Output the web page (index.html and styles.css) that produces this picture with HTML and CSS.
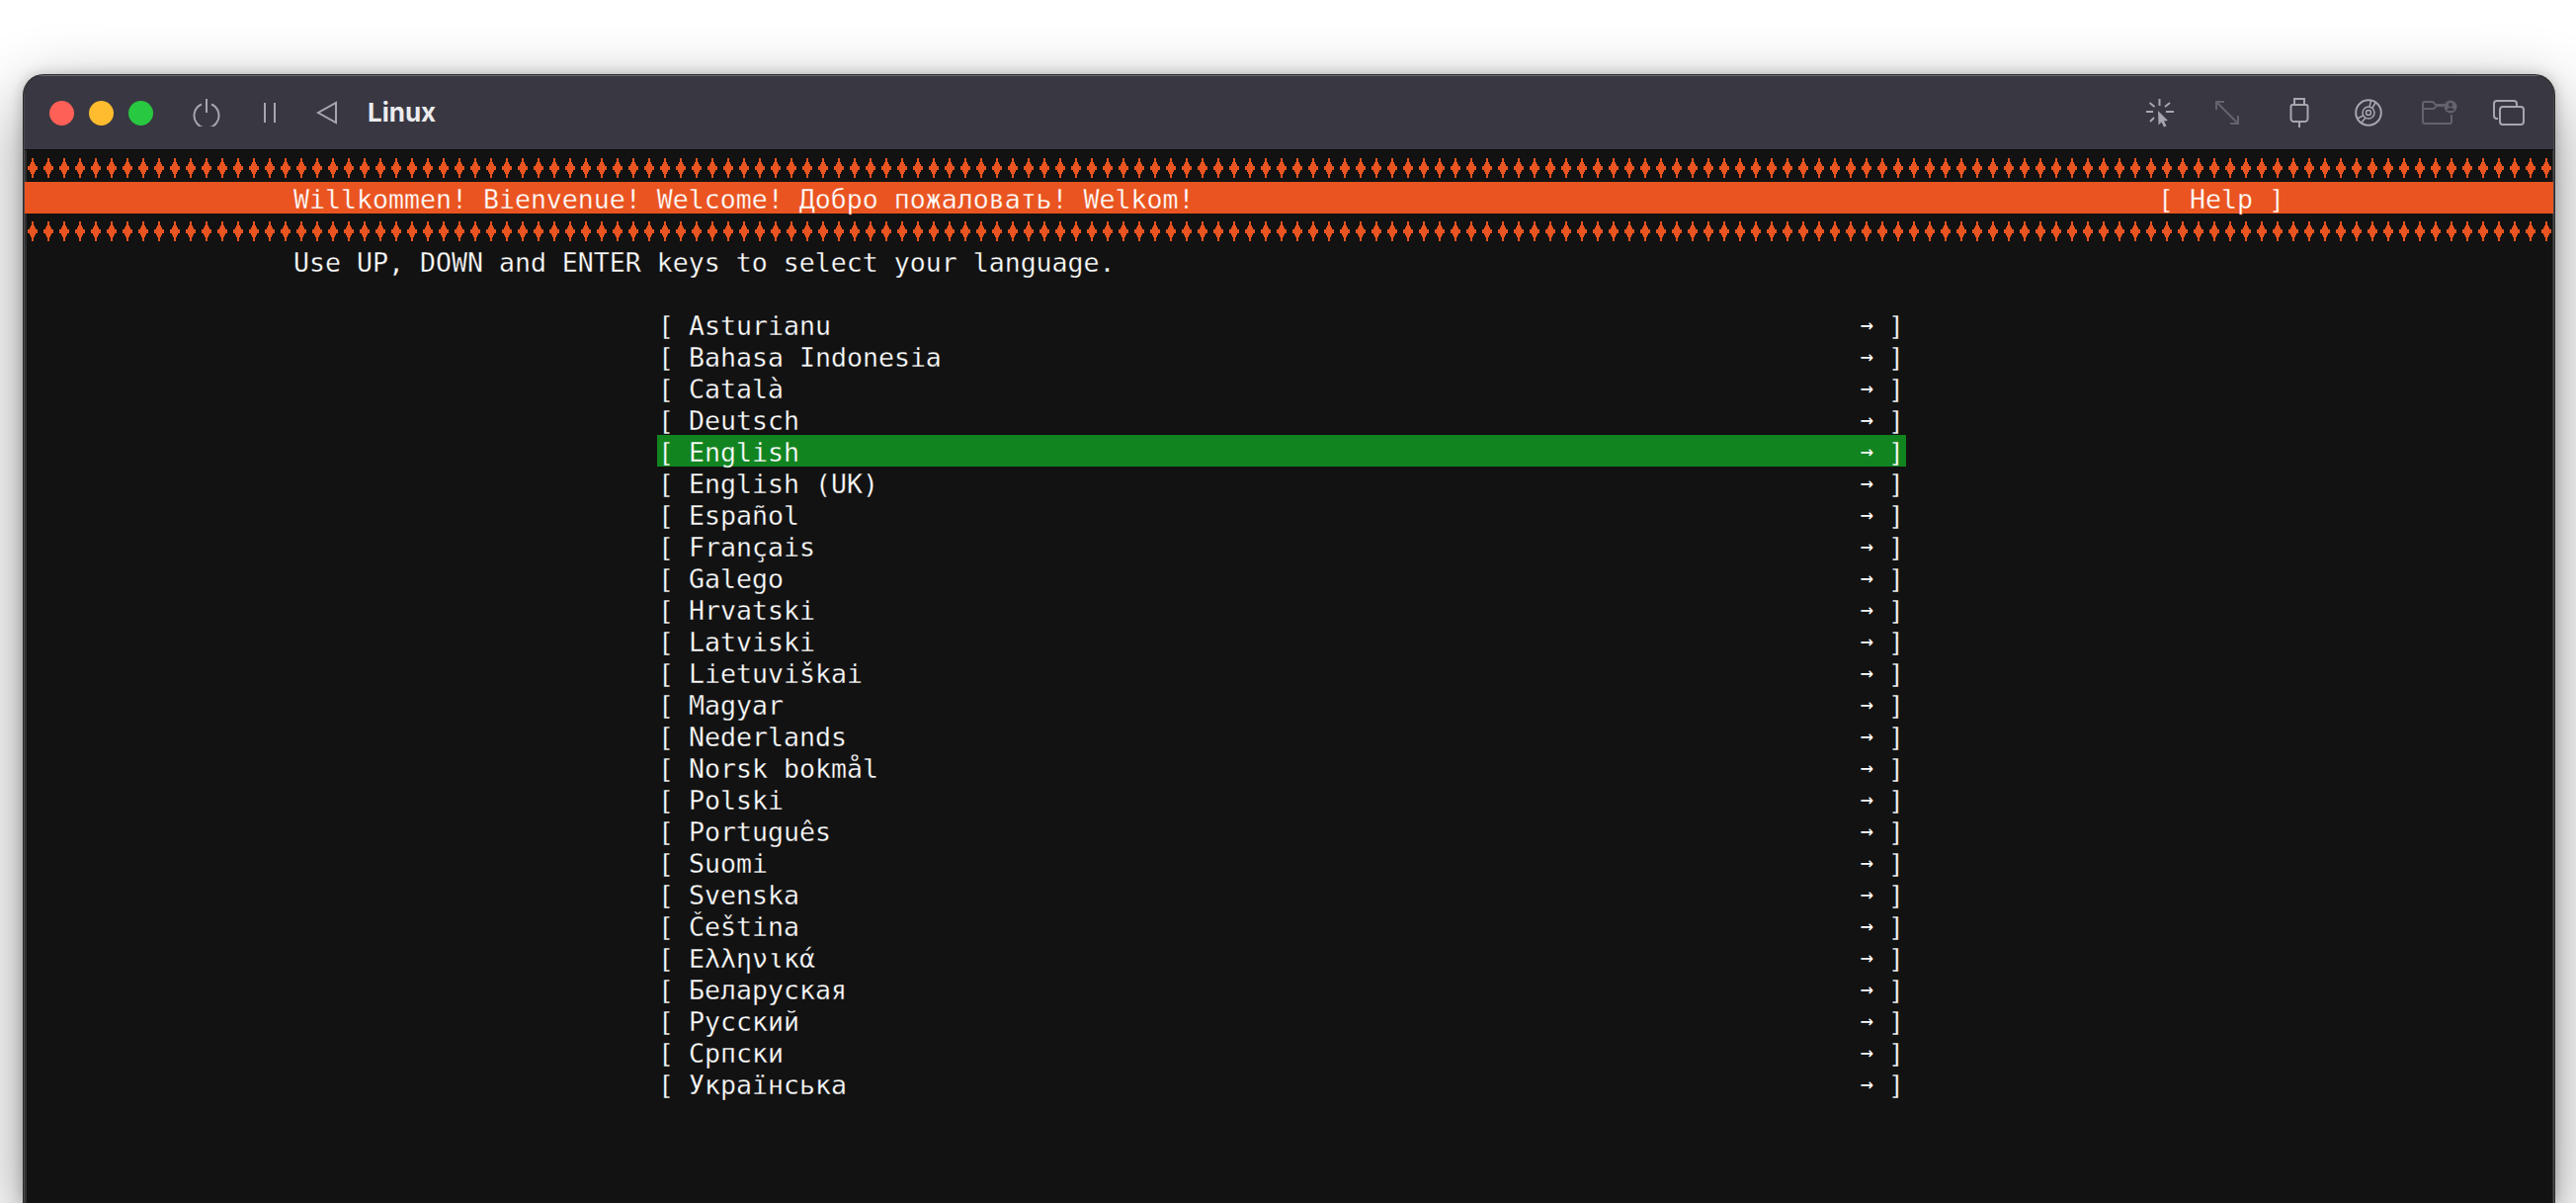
FILE: index.html
```html
<!DOCTYPE html>
<html lang="en">
<head>
<meta charset="utf-8">
<title>Linux</title>
<link rel="stylesheet" href="styles.css">
</head>
<body>
<svg class="defs" width="0" height="0" aria-hidden="true">
  <defs>
    <pattern id="dia" width="16" height="32" patternUnits="userSpaceOnUse">
      <path fill="#e95420" d="M7 8h2v4h1v2h1v2h2v4h-2v2h-1v2H9v4H7v-4H6v-2H5v-2H3v-4h2v-2h1v-2h1z"/>
    </pattern>
  </defs>
</svg>
<div class="window">
  <header class="titlebar">
    <div class="lights"><span class="light red"></span><span class="light yellow"></span><span class="light green"></span></div>
    <div class="tools-left">
      <svg class="ic ic-power" viewBox="0 0 28 28"><path d="M9 5.500a12.500 12.500 0 1 0 10 0M14 0v14"/></svg>
      <svg class="ic ic-pause" viewBox="0 0 14 24"><path d="M2 2v20M12 2v20"/></svg>
      <svg class="ic ic-play" viewBox="0 0 22 24"><path d="M20 2v20L2 12z"/></svg>
      <span class="vm-name">Linux</span>
    </div>
    <div class="tools-right">
      <svg class="ic ic-capture" viewBox="0 0 30 30"><path d="M14.500 1v7M1 14h7M21 14h8M4.500 5l5 4M25 5l-5 4M5 24l4-4"/><path class="solid" d="M13 13l10 10-4 .5 2.500 5-2.500 1-2.500-5-3 3z"/></svg>
      <svg class="ic ic-resize dim" viewBox="0 0 26 26"><path d="M2 10V2h8M2 2l22 22M24 16v8h-8"/></svg>
      <svg class="ic ic-usb" viewBox="0 0 20 32"><path d="M5 8V2h10v6M3 8h14a1.500 1.500 0 0 1 1.500 1.500V22a3 3 0 0 1-3 3h-11a3 3 0 0 1-3-3V9.500A1.500 1.500 0 0 1 3 8zM10 25v6"/></svg>
      <svg class="ic ic-disc" viewBox="0 0 28 28"><circle cx="14" cy="14" r="12.800"/><circle class="thin" cx="14" cy="14" r="6"/><circle class="thin" cx="14" cy="14" r="2.500"/><path class="thin" d="M16.500 2l-1.500 6M21 4l-3 5M2.500 20l6-3M7 24l4-5"/></svg>
      <svg class="ic ic-folder dim" viewBox="0 0 36 26"><path d="M30 15v7a2 2 0 0 1-2 2H3a2 2 0 0 1-2-2V4a2 2 0 0 1 2-2h8l3 3h9M1 9h11l3-3h7"/><circle class="solid" cx="29" cy="7" r="6.500"/><circle class="cut" cx="29" cy="5" r="2"/><path class="cut" d="M25.500 11a3.500 3 0 0 1 7 0z"/></svg>
      <svg class="ic ic-windows" viewBox="0 0 34 28"><path d="M6 20H5a3 3 0 0 1-3-3V5a3 3 0 0 1 3-3h17a3 3 0 0 1 3 3v2"/><rect x="8" y="8" width="24" height="18" rx="3"/></svg>
    </div>
  </header>
  <main class="term">
    <svg class="dia-row" width="100%" height="32" aria-hidden="true"><rect width="100%" height="32" fill="url(#dia)"/></svg>
    <div class="banner"><span class="txt">Willkommen! Bienvenue! Welcome! Добро пожаловать! Welkom!</span><span class="txt">[ Help ]</span></div>
    <svg class="dia-row" width="100%" height="32" aria-hidden="true"><rect width="100%" height="32" fill="url(#dia)"/></svg>
    <p class="hint txt">Use UP, DOWN and ENTER keys to select your language.</p>
    <ul class="langs">
      <li class="lang"><span class="cell open">[</span><span class="name txt"> Asturianu</span><span class="arrow">→</span><span class="cell close">]</span></li>
      <li class="lang"><span class="cell open">[</span><span class="name txt"> Bahasa Indonesia</span><span class="arrow">→</span><span class="cell close">]</span></li>
      <li class="lang"><span class="cell open">[</span><span class="name txt"> Català</span><span class="arrow">→</span><span class="cell close">]</span></li>
      <li class="lang"><span class="cell open">[</span><span class="name txt"> Deutsch</span><span class="arrow">→</span><span class="cell close">]</span></li>
      <li class="lang current"><span class="cell open">[</span><span class="name txt"> English</span><span class="arrow">→</span><span class="cell close">]</span></li>
      <li class="lang"><span class="cell open">[</span><span class="name txt"> English (UK)</span><span class="arrow">→</span><span class="cell close">]</span></li>
      <li class="lang"><span class="cell open">[</span><span class="name txt"> Español</span><span class="arrow">→</span><span class="cell close">]</span></li>
      <li class="lang"><span class="cell open">[</span><span class="name txt"> Français</span><span class="arrow">→</span><span class="cell close">]</span></li>
      <li class="lang"><span class="cell open">[</span><span class="name txt"> Galego</span><span class="arrow">→</span><span class="cell close">]</span></li>
      <li class="lang"><span class="cell open">[</span><span class="name txt"> Hrvatski</span><span class="arrow">→</span><span class="cell close">]</span></li>
      <li class="lang"><span class="cell open">[</span><span class="name txt"> Latviski</span><span class="arrow">→</span><span class="cell close">]</span></li>
      <li class="lang"><span class="cell open">[</span><span class="name txt"> Lietuviškai</span><span class="arrow">→</span><span class="cell close">]</span></li>
      <li class="lang"><span class="cell open">[</span><span class="name txt"> Magyar</span><span class="arrow">→</span><span class="cell close">]</span></li>
      <li class="lang"><span class="cell open">[</span><span class="name txt"> Nederlands</span><span class="arrow">→</span><span class="cell close">]</span></li>
      <li class="lang"><span class="cell open">[</span><span class="name txt"> Norsk bokmål</span><span class="arrow">→</span><span class="cell close">]</span></li>
      <li class="lang"><span class="cell open">[</span><span class="name txt"> Polski</span><span class="arrow">→</span><span class="cell close">]</span></li>
      <li class="lang"><span class="cell open">[</span><span class="name txt"> Português</span><span class="arrow">→</span><span class="cell close">]</span></li>
      <li class="lang"><span class="cell open">[</span><span class="name txt"> Suomi</span><span class="arrow">→</span><span class="cell close">]</span></li>
      <li class="lang"><span class="cell open">[</span><span class="name txt"> Svenska</span><span class="arrow">→</span><span class="cell close">]</span></li>
      <li class="lang"><span class="cell open">[</span><span class="name txt"> Čeština</span><span class="arrow">→</span><span class="cell close">]</span></li>
      <li class="lang"><span class="cell open">[</span><span class="name txt"> Ελληνικά</span><span class="arrow">→</span><span class="cell close">]</span></li>
      <li class="lang"><span class="cell open">[</span><span class="name txt"> Беларуская</span><span class="arrow">→</span><span class="cell close">]</span></li>
      <li class="lang"><span class="cell open">[</span><span class="name txt"> Русский</span><span class="arrow">→</span><span class="cell close">]</span></li>
      <li class="lang"><span class="cell open">[</span><span class="name txt"> Српски</span><span class="arrow">→</span><span class="cell close">]</span></li>
      <li class="lang"><span class="cell open">[</span><span class="name txt"> Українська</span><span class="arrow">→</span><span class="cell close">]</span></li>
    </ul>
  </main>
</div>
</body>
</html>
```

FILE: styles.css
```css
* { box-sizing: border-box; }
html, body { margin: 0; height: 100%; }
body {
  background: #fff;
  overflow: hidden;
  padding: 76px 22px 0 24px;
  height: 1217px;
}
.defs { position: absolute; }
.window {
  height: 1141px;
  background: #121212;
  border-radius: 20px 20px 0 0;
  box-shadow: 0 0 0 1px #2b2b2e, 0 24px 70px rgba(0, 0, 0, .45), 0 0 14px rgba(0, 0, 0, .25);
  border-left: 1px solid #4a4a4e;
  border-right: 1px solid #4a4a4e;
  overflow: hidden;
}
.titlebar {
  height: 76px;
  background: #393842;
  border-top: 1px solid #6a6a70;
  border-bottom: 1px solid #0c0c0c;
  display: flex;
  align-items: center;
  padding: 0 28px 0 25px;
}
.lights { display: flex; gap: 15px; }
.light { width: 25px; height: 25px; border-radius: 50%; }
.red { background: #fe5f57; }
.yellow { background: #febc2e; }
.green { background: #28c840; }
.tools-left { display: flex; align-items: center; margin-right: auto; margin-left: 40px; }
.tools-right { display: flex; align-items: center; }
.ic { fill: none; stroke: #a7a6ad; stroke-width: 2; display: block; }
.ic .solid { fill: #a7a6ad; stroke: none; }
.ic .thin { stroke-width: 1.5; }
.ic .cut { fill: #393842; stroke: none; }
.ic.dim { stroke: #64636b; }
.ic.dim .solid { fill: #64636b; }
.ic-power { width: 28px; height: 28px; }
.ic-pause { width: 14px; height: 24px; margin-left: 43px; }
.ic-play { width: 22px; height: 24px; margin-left: 40px; }
.vm-name {
  font: 700 26px/1 Inter, "Liberation Sans", sans-serif;
  color: #ececee;
  margin-left: 30px;
}
.ic-capture { width: 30px; height: 30px; }
.ic-resize { width: 26px; height: 26px; margin-left: 40px; }
.ic-usb { width: 20px; height: 32px; margin-left: 50px; }
.ic-disc { width: 28px; height: 28px; margin-left: 46px; }
.ic-folder { width: 36px; height: 26px; margin-left: 40px; }
.ic-windows { width: 34px; height: 28px; margin-left: 35px; }
.term {
  color: #fff;
  font-family: "DejaVu Sans Mono", "Liberation Mono", monospace;
  font-size: 26.57px;
  line-height: 36px;
  height: 100%;
  box-shadow: inset 2px 0 #2e2e2e, inset -1px 0 #2e2e2e;
  -webkit-text-stroke: .3px #121212;
}
.txt { white-space: pre; }
.dia-row { display: block; height: 32px; }
.banner {
  height: 32px;
  background: #e95420;
  display: flex;
  justify-content: space-between;
  padding: 0 272px;
  -webkit-text-stroke-color: #e95420;
}
.hint { margin: 0; height: 64px; padding-left: 272px; }
.langs { list-style: none; margin: 0; padding: 0 0 0 640px; width: 1904px; }
.lang { display: flex; height: 32px; }
.current { background: #118420; -webkit-text-stroke-color: #118420; }
.name { flex: 1; }
.cell { width: 16px; flex: none; }
.open { text-indent: 1px; }
.close { text-indent: -2px; }
.arrow { width: 32px; flex: none; font-size: 22px; line-height: 33px; padding-right: 16px; text-align: center; -webkit-text-stroke-width: 0; }
```
